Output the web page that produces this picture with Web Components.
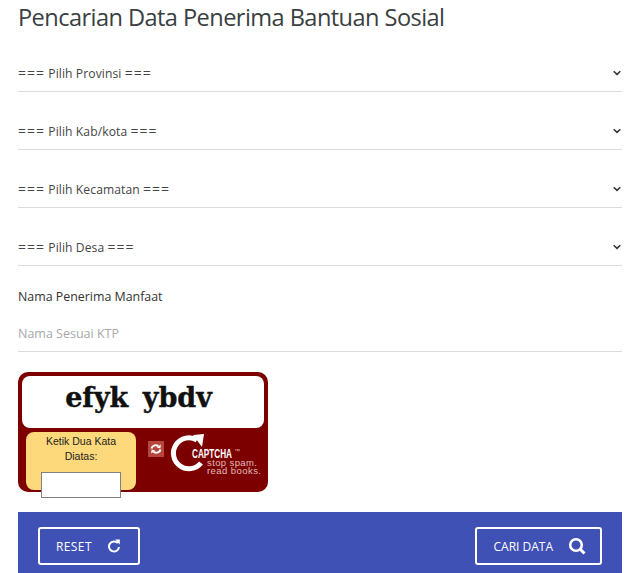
<!DOCTYPE html>
<html lang="id">
<head>
<meta charset="utf-8">
<style>
html,body{margin:0;padding:0;background:#fff;overflow:hidden}
body{font-family:"Open Sans","Noto Sans",sans-serif;color:#333}
</style>
</head>
<body>
<search-page>
  <page-title>Pencarian Data Penerima Bantuan Sosial</page-title>
  <select-field label="Pilih Provinsi"></select-field>
  <select-field label="Pilih Kab/kota"></select-field>
  <select-field label="Pilih Kecamatan"></select-field>
  <select-field label="Pilih Desa"></select-field>
  <name-field label="Nama Penerima Manfaat" placeholder="Nama Sesuai KTP"></name-field>
  <captcha-box></captcha-box>
  <action-bar>
    <action-button icon="reset">RESET</action-button>
    <action-button icon="search">CARI DATA</action-button>
  </action-bar>
</search-page>
<script>
function def(name, html, init){
  customElements.define(name, class extends HTMLElement{
    constructor(){super();this.attachShadow({mode:'open'}).innerHTML=typeof html==='function'?html(this):html;}
    connectedCallback(){if(init)init(this)}
  });
}
def('search-page',`<style>:host{display:block;width:604px;height:573px;margin-left:18px;overflow:hidden}</style><slot></slot>`);
def('page-title',`<style>:host{display:block;height:34px;margin-bottom:21px;font-size:23.6px;letter-spacing:-.57px;line-height:34px;color:#3a3f3f;white-space:nowrap}</style><slot></slot>`);
def('select-field',`<style>
:host{display:flex;align-items:center;justify-content:space-between;height:36px;margin-bottom:21px;border-bottom:1px solid #dcdcdc;font-size:12.1px;letter-spacing:.1px;color:#444}
svg{width:8px;height:6px;margin-right:1px;margin-top:-1px}
.eq{font-size:14px;line-height:1;letter-spacing:1px}
</style><span><span class="eq">===</span> <span class="t"></span> <span class="eq">===</span></span><svg viewBox="0 0 8 6" fill="none" stroke="#333" stroke-width="1.5"><path d="M.7 1.2 4 4.4 7.3 1.2"/></svg>`,el=>{
  el.shadowRoot.querySelector('.t').textContent=el.getAttribute('label');
});
def('name-field',`<style>
:host{display:block;font-size:12.4px;padding-top:1px;margin-bottom:20px}
.l{height:18px;line-height:18px;color:#333}
.i{height:36px;line-height:38px;margin-top:9px;border-bottom:1px solid #dcdcdc;color:#a8a8a8;font-size:12.5px}
</style><div class="l"></div><div class="i"></div>`,el=>{
  el.shadowRoot.querySelector('.l').textContent=el.getAttribute('label');
  el.shadowRoot.querySelector('.i').textContent=el.getAttribute('placeholder');
});
def('captcha-box',`<style>
:host{display:block;box-sizing:border-box;width:250px;height:120px;padding:4px;background:#7d0000;border-radius:10px;margin-bottom:20px}
.word{box-sizing:border-box;height:52px;padding:0 9px 9px 0;background:#fff;border-radius:8px;display:flex;align-items:center;justify-content:center;font:bold 27px "DejaVu Serif",serif;color:#111;word-spacing:5px;-webkit-text-stroke:.4px #111}
.low{display:flex;margin-top:4px;padding-left:4px}
.ask{flex:none;box-sizing:border-box;width:110px;height:58px;background:#fdd97c;border-radius:8px;font:10.500px/15px "Liberation Sans",sans-serif;color:#222;text-align:center;padding:2px 8px 0}
.box{display:block;box-sizing:border-box;width:80px;height:26px;background:#fff;border:1px solid #808080;margin:8px 0 0 7px;position:relative}
.reload{margin:9px 0 0 12px;flex:none}
.logo{margin:0 0 0 2px;flex:none}
</style>
<div class="word">efyk ybdv</div>
<div class="low">
 <div class="ask">Ketik Dua Kata Diatas:<span class="box"></span></div>
 <svg class="reload" width="16" height="16" viewBox="0 0 16 16"><rect width="16" height="16" fill="#b5473c"/><path d="M3.500 7.500C4 4.600 7.500 3.400 10.500 5.200" fill="none" stroke="#fff" stroke-width="2"/><path d="M12.800 3.400 12.400 7.400 8.800 6.600z" fill="#fff"/><path d="M12.500 8.500C12 11.400 8.500 12.600 5.500 10.800" fill="none" stroke="#fff" stroke-width="2"/><path d="M3.200 12.600 3.600 8.600 7.200 9.400z" fill="#fff"/></svg>
 <svg class="logo" width="98" height="58" viewBox="0 0 98 58" style="font-family:'Liberation Sans',sans-serif">
  <path d="M31 8A15.500 15.500 0 1 0 35 31" fill="none" stroke="#fff" stroke-width="5"/>
  <path d="M27 3 38 2 36 15z" fill="#fff"/>
  <text x="26" y="26" font-size="12.500" font-weight="700" fill="#fff" textLength="40" lengthAdjust="spacingAndGlyphs">CAPTCHA</text>
  <text x="68" y="21" font-size="6" fill="#e0bcbc">™</text>
  <text x="41" y="34" font-size="9.500" fill="#e0bcbc" textLength="50">stop spam.</text>
  <text x="41" y="42" font-size="9.500" fill="#e0bcbc" textLength="54">read books.</text>
 </svg>
</div>`);
def('action-bar',`<style>:host{display:flex;justify-content:space-between;align-items:flex-start;box-sizing:border-box;height:61px;padding:15px 20px 0;background:#3f51b5}</style><slot></slot>`);
def('action-button',el=>{
  const reset=el.getAttribute('icon')==='reset';
  const svg=reset
   ?`<svg width="14" height="14" viewBox="0 0 14 14" fill="none"><path d="M10.800 4.200A5 5 0 1 0 12 8" stroke="#fff" stroke-width="2"/><path d="M8.200 .6 12.800 .6 12.800 5.400z" fill="#fff"/></svg>`
   :`<svg width="18" height="18" viewBox="0 0 18 18" fill="none"><circle cx="8" cy="8" r="5.800" stroke="#fff" stroke-width="2.600"/><path d="M12 12 16.500 16.500" stroke="#fff" stroke-width="3"/></svg>`;
  return `<style>:host{display:flex;align-items:center;box-sizing:border-box;height:38px;padding:0 ${reset?17:14}px 0 16px;gap:15px;border:2px solid #fff;border-radius:3px;color:#fff;font-size:12px;white-space:nowrap}span{letter-spacing:${reset?.4:0}px}svg{flex:none}</style><span><slot></slot></span>${svg}`;
});
</script>
</body>
</html>
